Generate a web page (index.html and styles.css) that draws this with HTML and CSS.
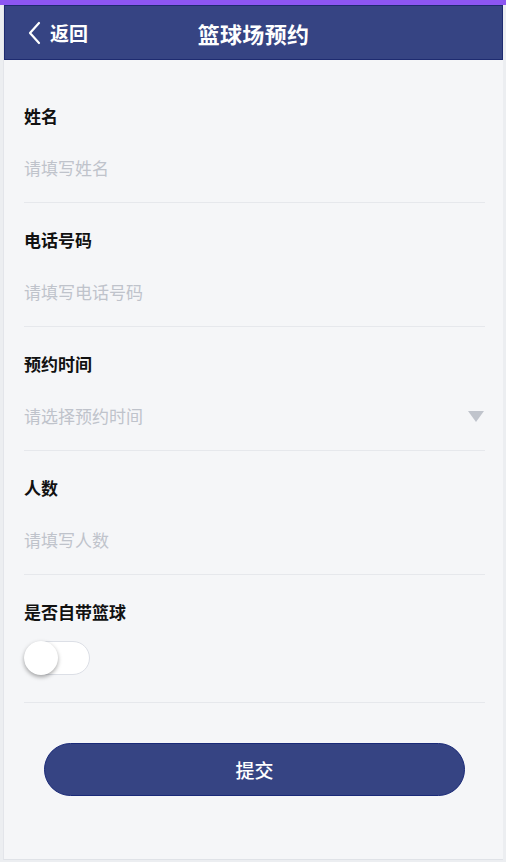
FILE: index.html
```html
<!DOCTYPE html>
<html lang="zh">
<head>
<meta charset="utf-8">
<title>篮球场预约</title>
<link rel="stylesheet" href="styles.css">
</head>
<body>
<div class="topbar"></div>
<div class="frame">
  <header class="header">
    <div class="back">
      <svg class="chev" width="14" height="24" viewBox="0 0 14 24"><polyline points="12,2 3,12 12,22" fill="none" stroke="#fff" stroke-width="2.2" stroke-linecap="round" stroke-linejoin="round"/></svg>
      <span>返回</span>
    </div>
    <div class="title">篮球场预约</div>
  </header>
  <main class="form">
    <div class="item">
      <div class="label">姓名</div>
      <div class="field"><span class="ph">请填写姓名</span></div>
    </div>
    <div class="item">
      <div class="label">电话号码</div>
      <div class="field"><span class="ph">请填写电话号码</span></div>
    </div>
    <div class="item">
      <div class="label">预约时间</div>
      <div class="field"><span class="ph">请选择预约时间</span><span class="caret"></span></div>
    </div>
    <div class="item">
      <div class="label">人数</div>
      <div class="field"><span class="ph">请填写人数</span></div>
    </div>
    <div class="item item-switch">
      <div class="label">是否自带篮球</div>
      <div class="switch"><span class="knob"></span></div>
    </div>
    <div class="actions">
      <button class="submit">提交</button>
    </div>
  </main>
</div>
</body>
</html>
```
FILE: styles.css
```css
html, body {
  margin: 0;
  padding: 0;
  height: 100%;
}
body {
  background: #eceef1;
  font-family: "Noto Sans CJK SC", "Noto Sans", sans-serif;
}
.topbar {
  height: 5px;
  background: #8c56f2;
}
.frame {
  margin: 0 3px;
  height: 855px;
  box-sizing: border-box;
  background: #f5f6f8;
  border-bottom: 1px solid #dfe2e7;
  border-left: 1px solid #e3e5ea;
}
.header {
  height: 55px;
  box-sizing: border-box;
  background: #364483;
  border: 1px solid #1e2b70;
  display: flex;
  align-items: center;
  justify-content: center;
  position: relative;
  color: #fff;
}
.back {
  position: absolute;
  left: 22px;
  top: 0;
  bottom: 0;
  display: flex;
  align-items: center;
  gap: 9px;
  font-size: 19px;
  font-weight: 700;
}
.chev {
  display: block;
}
.title {
  font-size: 22px;
  font-weight: 700;
  letter-spacing: 0.3px;
}
.form {
  padding: 19px 18px 0 20px;
}
.item {
  padding: 26px 0 13px;
  border-bottom: 1px solid #e6e8ec;
}
.label {
  font-size: 17px;
  line-height: 22px;
  font-weight: 700;
  color: #111;
}
.field {
  margin-top: 18px;
  height: 44px;
  display: flex;
  align-items: center;
  justify-content: space-between;
}
.ph {
  font-size: 17px;
  color: #bfc3cb;
}
.caret {
  width: 0;
  height: 0;
  border-left: 8px solid transparent;
  border-right: 8px solid transparent;
  border-top: 11px solid #c0c4cc;
  margin-right: 1px;
  margin-top: 3px;
}
.item-switch {
  padding-bottom: 27px;
}
.switch {
  margin-top: 18px;
  width: 66px;
  height: 34px;
  box-sizing: border-box;
  border: 1px solid #dcdfe6;
  border-radius: 17px;
  background: #fff;
  position: relative;
}
.knob {
  position: absolute;
  left: -1px;
  top: -1px;
  width: 34px;
  height: 34px;
  border-radius: 50%;
  background: #fff;
  box-shadow: 0 2px 4px rgba(0,0,0,0.35);
}
.actions {
  padding: 40px 20px 0 20px;
}
.submit {
  display: block;
  width: 100%;
  height: 53px;
  border: 1px solid #1a2a78;
  border-radius: 27px;
  background: #364483;
  color: #fff;
  font-family: "Noto Sans CJK SC", "Noto Sans", sans-serif;
  font-size: 19px;
  font-weight: 500;
}
```
